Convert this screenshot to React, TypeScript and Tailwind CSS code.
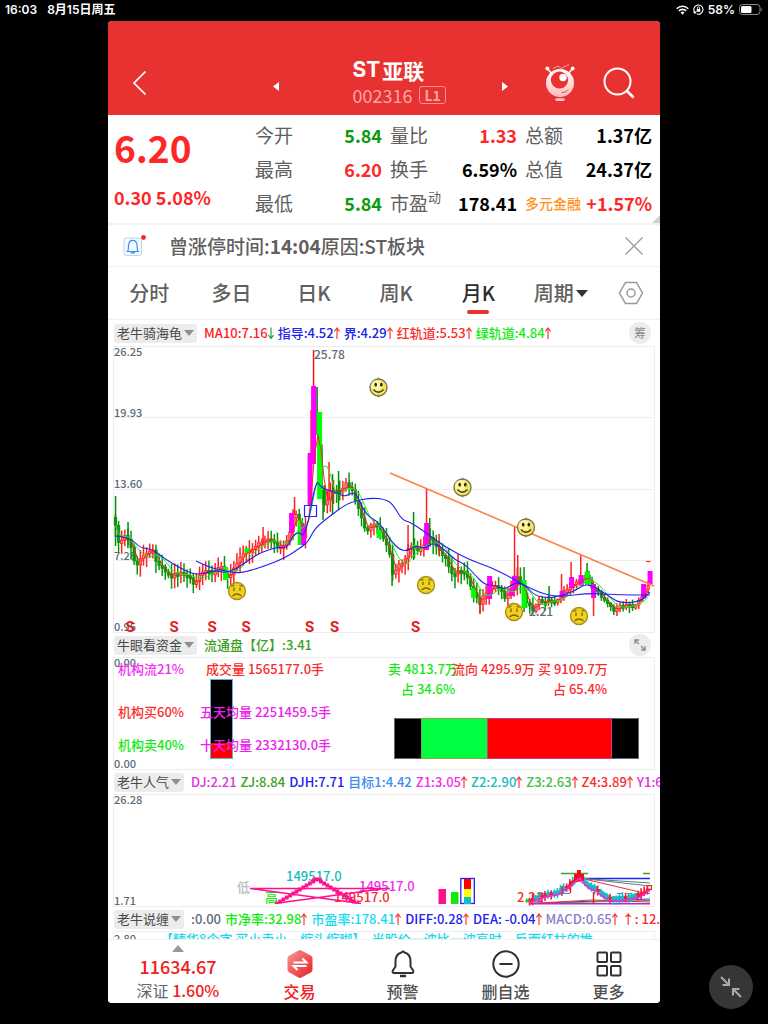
import React from "react";

type Pt = [number, number];

const FONT = "font-['Noto_Sans_CJK_SC','Noto_Sans',sans-serif]";

/* ---------- small drawings ---------- */

function Arrow({ down = false, className = "text-[#fa3a3a]" }: { down?: boolean; className?: string }) {
  return (
    <svg viewBox="0 0 6 14" className={`h-[14px] w-[6px] shrink-0 ${className}`} fill="none" stroke="currentColor" strokeWidth="1.2">
      {down ? <path d="M3 1.500v11M.4 9 3 12.500 5.600 9" /> : <path d="M3 13V2M.4 5.500 3 2l2.600 3.500" />}
    </svg>
  );
}

function Robot() {
  return (
    <svg viewBox="0 0 30 38" className="h-[38px] w-[30px]">
      <defs>
        <linearGradient id="bot" x1="0" y1="0" x2="0" y2="1">
          <stop offset="0" stopColor="#fff" />
          <stop offset="1" stopColor="#ffb9b9" />
        </linearGradient>
      </defs>
      <path d="M8 4.500 13 2l3 2.500 8-4" fill="none" stroke="#f6a5a5" strokeWidth="1" />
      <path d="M2.500 4.500 6 9M27.500 4.500 24 9" stroke="#fff" strokeWidth="1.300" />
      <circle cx="2.300" cy="4.500" r="1.900" fill="#fff" />
      <circle cx="27.700" cy="4.500" r="1.900" fill="#fff" />
      <circle cx="15" cy="19" r="14" fill="url(#bot)" />
      <circle cx="14.500" cy="16" r="8.600" fill="#e83131" />
      <circle cx="18" cy="13.500" r="3.700" fill="#fff" />
      <path d="M16.500 28.500c3 .3 5-.8 6.500-3" fill="none" stroke="#e84a4a" strokeWidth="1" />
      <ellipse cx="15" cy="35.500" rx="5" ry="1.500" fill="#ffc4c4" />
    </svg>
  );
}

function Face({ x, y, sad = false }: { x: number; y: number; sad?: boolean }) {
  return (
    <g transform={`translate(${x} ${y})`}>
      {!sad && <path d="M0-9.800V9.800" stroke="#8a8468" strokeWidth="1.500" />}
      <circle r="8.500" fill={sad ? "#efd21c" : "#f3e35c"} stroke={sad ? "#a88c18" : "#77704a"} strokeWidth="1.300" />
      {!sad && <circle cx="-2" cy="-2" r="5.500" fill="#fffbb5" opacity=".75" />}
      {sad ? (
        <g fill="none" stroke="#7b6410" strokeWidth="1.300">
          <path d="M-3-3.500V0M3-3.500V0M-4.500 5Q0 1 4.500 5M-5.500-4.500l3-1.500M5.500-4.500l-3-1.500" />
        </g>
      ) : (
        <>
          <ellipse cx="-2.800" cy="-2.800" rx="1.300" ry="1.900" fill="#222" />
          <ellipse cx="2.800" cy="-2.800" rx="1.300" ry="1.900" fill="#222" />
          <path d="M-5 2Q0 7.500 5 2" fill="none" stroke="#3a3416" strokeWidth="1.300" />
        </>
      )}
    </g>
  );
}

/* ---------- price chart ---------- */

const TREND: Pt[] = [
  [115, 525], [118, 540], [121, 544], [125, 535], [130, 543], [134, 560], [137, 567], [141, 558], [147, 551], [152, 549],
  [157, 562], [162, 567], [167, 572], [171, 578], [176, 573], [181, 572], [186, 575], [190, 579], [194, 586], [198, 579],
  [204, 572], [209, 569], [215, 573], [220, 565], [226, 577], [232, 572], [238, 560], [244, 551], [250, 551], [256, 545],
  [262, 542], [270, 540], [277, 545], [284, 546], [290, 532], [294, 515], [298, 515], [301, 538], [304, 540], [307, 515],
  [310, 480], [313, 420], [316, 420], [319, 460], [322, 500], [325, 508], [330, 492], [336, 490], [341, 494], [346, 484],
  [352, 490], [357, 505], [362, 521], [367, 532], [373, 524], [379, 530], [384, 540], [389, 551], [393, 574], [398, 566],
  [404, 562], [409, 545], [414, 545], [419, 553], [424, 545], [429, 533], [434, 546], [441, 552], [446, 558], [451, 573],
  [457, 572], [463, 570], [469, 583], [475, 595], [480, 603], [485, 592], [490, 588], [495, 583], [500, 591], [506, 599],
  [512, 590], [517, 577], [523, 590], [528, 606], [533, 611], [537, 601], [545, 601], [552, 601], [559, 598], [566, 590],
  [573, 583], [580, 580], [586, 577], [592, 588], [598, 590], [603, 598], [608, 605], [614, 610], [620, 607], [628, 605],
  [636, 604], [642, 596], [647, 588], [651, 576],
];

function at(points: Pt[], x: number): number {
  for (let i = 1; i < points.length; i++) {
    if (x <= points[i][0]) {
      const [x0, y0] = points[i - 1];
      const [x1, y1] = points[i];
      return y0 + ((y1 - y0) * (x - x0)) / (x1 - x0);
    }
  }
  return points[points.length - 1][1];
}

const noise = (n: number) => {
  const v = Math.sin(n * 12.9898) * 43758.5453;
  return v - Math.floor(v);
};

const COUNT = 172;
const STEP = 3.115;
const closes: Pt[] = Array.from({ length: COUNT }, (_, i) => {
  const x = 115.5 + i * STEP;
  return [x, at(TREND, x) + (noise(i) - 0.5) * 4];
});

function average(span: number): string {
  return closes
    .map(([x], i) => {
      const part = closes.slice(Math.max(0, i - span + 1), i + 1);
      return `${x.toFixed(1)},${(part.reduce((s, p) => s + p[1], 0) / part.length).toFixed(1)}`;
    })
    .join(" ");
}

/* Quadratic segments through the midpoints give the averages their rounded run. */
function smooth(points: Pt[]): string {
  let d = `M${points[0][0]} ${points[0][1]}`;
  for (let i = 1; i < points.length - 1; i++) {
    const [x, y] = points[i];
    const [nx, ny] = points[i + 1];
    d += `Q${x} ${y} ${(x + nx) / 2} ${(y + ny) / 2}`;
  }
  const end = points[points.length - 1];
  return `${d}L${end[0]} ${end[1]}`;
}

const MID_LINE: Pt[] = [
  [115, 536], [130, 537], [140, 548], [152, 549], [165, 559], [180, 568], [193, 574], [202, 574], [215, 570], [225, 573],
  [238, 568], [250, 559], [262, 552], [278, 547], [287, 548], [293, 535], [300, 532], [303, 537], [309, 520], [312, 500],
  [317, 480], [321, 488], [335, 492], [345, 497], [353, 492], [358, 497], [366, 515], [380, 523], [390, 540], [400, 550],
  [408, 551], [416, 545], [425, 549], [433, 542], [445, 550], [455, 560], [465, 564], [475, 575], [485, 585], [495, 585],
  [505, 590], [515, 582], [525, 585], [535, 596], [550, 598], [560, 596], [575, 591], [585, 584], [595, 587], [610, 597],
  [620, 603], [640, 602], [650, 592],
];
const SLOW_LINE: Pt[] = [
  [196, 561], [208, 567], [225, 571], [236, 573], [245, 572], [262, 567], [285, 558], [300, 548], [308, 542], [315, 528],
  [330, 516], [345, 505], [355, 501], [370, 498], [384, 499], [392, 503], [402, 520], [410, 522], [425, 532], [445, 547],
  [470, 560], [490, 567], [510, 577], [520, 583], [540, 593], [558, 597], [590, 593], [620, 595], [650, 595],
];

/* x, top, bottom of solid body, colour */
const BODIES: [number, number, number, string][] = [
  [225.5, 567, 580, "#00ff00"], [247, 548, 553, "#00ff00"], [291.5, 513, 533, "#ff00ff"], [300, 520, 545, "#00ff00"],
  [303.5, 524, 545, "#ff00ff"], [310, 453, 505, "#ff00ff"], [313.5, 386, 464, "#ff00ff"], [319.5, 412, 499, "#00ff00"],
  [379, 530, 538, "#00ff00"], [414, 545, 549, "#00ff00"], [426.5, 523, 550, "#ff00ff"], [473.5, 588, 598, "#00ff00"],
  [489.5, 576, 599, "#ff00ff"], [511.5, 588, 596, "#ff00ff"], [514.5, 576, 591, "#ff00ff"], [524, 580, 608, "#00ff00"],
  [562, 591, 597, "#ff00ff"], [571.5, 577, 588, "#ff00ff"], [581, 575, 586, "#ff00ff"], [587, 572, 584, "#00ff00"],
  [593.5, 584, 598, "#ff00ff"], [643.5, 584, 598, "#ff00ff"], [650, 571, 584, "#ff00ff"],
];

/* x, high, low, colour */
const WICKS: [number, number, number, string][] = [
  [115.5, 496, 546, "#008f00"], [128, 522, 545, "#008f00"], [294.5, 497, 515, "#ff2020"], [313.5, 350, 400, "#f01818"],
  [317, 387, 435, "#006f20"], [311, 410, 455, "#ff2020"], [329, 462, 500, "#ff2020"], [332.5, 474, 515, "#008f00"],
  [323, 490, 520, "#008f00"], [338.5, 471, 510, "#008f00"], [263, 527, 545, "#ff2020"], [392, 555, 586, "#008f00"],
  [408, 525, 550, "#ff2020"], [413.5, 512, 560, "#008f00"], [426.5, 489, 525, "#ff2020"], [429.7, 518, 545, "#008f00"],
  [439, 534, 555, "#ff2020"], [458, 554, 572, "#ff2020"], [480, 598, 614, "#ff2020"], [514.5, 527, 578, "#ff2020"],
  [517.7, 555, 585, "#ff2020"], [524, 567, 612, "#008f00"], [549, 586, 602, "#008f00"], [561.5, 574, 595, "#ff2020"],
  [571, 562, 580, "#ff2020"], [580.7, 555, 580, "#ff2020"], [587, 563, 584, "#008f00"], [593.5, 590, 616, "#ff2020"],
];

function Label({ x, y, fill = "#5c6b78", children }: { x: number; y: number; fill?: string; children: React.ReactNode }) {
  return <text x={x} y={y} fill={fill} fontSize="11" fontWeight="500">{children}</text>;
}

function PriceChart() {
  return (
    <svg viewBox="108 346 552 287" className="block w-full" role="img" aria-label="月K">
      <g fill="none" stroke="#eeeeef" strokeWidth="1">
        <path d="M113.500 346.500H654.500V632.500H113.500ZM113 417.500H655M113 489.500H655M113 560.500H655" />
      </g>
      <Label x={114} y={356}>26.25</Label>
      <Label x={114} y={417}>19.93</Label>
      <Label x={114} y={488}>13.60</Label>
      <Label x={114} y={560}>7.28</Label>
      <Label x={114} y={631}>0.95</Label>
      <text x="314" y="359" fill="#5c6b78" fontSize="12" fontWeight="500">25.78</text>
      {closes.map(([x, y], i) => {
        if (x > 307 && x < 321) return null;
        const prev = i ? closes[i - 1][1] : y - 8;
        const up = y <= prev;
        const color = up ? "#ff2020" : "#0a960a";
        const body = Math.max(3, Math.abs(y - prev));
        const top = Math.min(y, prev);
        const calm = x > 535 ? 0.5 : 1;
        return (
          <g key={i}>
            <rect x={x - 0.8} y={top - (2 + noise(i + 300) * 9) * calm} width="1.500" height={body + (5 + (noise(i + 300) + noise(i + 700)) * 9) * calm} fill={color} />
            <rect x={x - 1.2} y={top} width="2.400" height={body} fill={up ? "#ff8a8a" : color} stroke={color} strokeWidth="0.800" />
          </g>
        );
      })}
      {WICKS.map(([x, a, b, c], i) => <rect key={i} x={x - 0.7} y={a} width="1.500" height={b - a} fill={c} />)}
      {BODIES.map(([x, a, b, c], i) => <rect key={i} x={x - 2.4} y={a} width="5" height={b - a} fill={c} />)}
      <g fill="none" strokeLinejoin="round">
        <polyline points={average(3)} stroke="#f02828" strokeWidth="1" />
        <polyline points={average(6)} stroke="#20f020" strokeWidth="1" />
        <path d={smooth(MID_LINE)} stroke="#2222ee" strokeWidth="1.100" />
        <path d={smooth(SLOW_LINE)} stroke="#2222ee" strokeWidth="1.100" />
        <rect x="304.500" y="505.500" width="12" height="11" stroke="#2222ff" strokeWidth="1.200" />
        <path d="M390 473 654 586" stroke="#ff8048" strokeWidth="1.600" />
        <path d="M646 561.500h4.500" stroke="#f03030" strokeWidth="1.200" />
      </g>
      <Face x={378.5} y={387.5} />
      <Face x={462.5} y={487.5} />
      <Face x={526} y={527.5} />
      <Face x={237} y={591} sad />
      <Face x={426} y={585} sad />
      <Face x={514} y={612} sad />
      <Face x={579} y={616} sad />
      <text x="529" y="616" fill="#5c6b78" fontSize="12" fontWeight="500">2.21</text>
      <g fill="#e02020" className="font-[Roboto,sans-serif]" fontSize="15" fontWeight="700" textAnchor="middle">
        {[130, 174, 212, 246, 309.5, 334.5, 415.5].map((x) => <text key={x} x={x} y="632">S</text>)}
      </g>
    </svg>
  );
}

/* ---------- capital chart ---------- */

function CapitalChart() {
  const t = (x: number, y: number, fill: string, s: string) => <text key={s} x={x} y={y} fill={fill} fontSize="13">{s}</text>;
  return (
    <svg viewBox="108 657 552 113" className="block w-full" role="img" aria-label="牛眼看资金" fontWeight="500">
      <path d="M113.500 657.500H654.500V769.500H113.500Z" fill="none" stroke="#eeeeef" />
      <Label x={114} y={667}>0.00</Label>
      <Label x={114} y={768}>0.00</Label>
      <rect x="210.500" y="679.500" width="22" height="79" fill="#000" stroke="#5fb4cc" />
      <rect x="211" y="743" width="21" height="15" fill="#f00" />
      {t(118, 674, "#f030f0", "机构流21%")}
      {t(118, 717, "#fb2c2c", "机构买60%")}
      {t(118, 750, "#12ea12", "机构卖40%")}
      {t(206, 674, "#fb2c2c", "成交量 1565177.0手")}
      {t(200, 717, "#ee22ee", "五天均量 2251459.5手")}
      {t(200, 750, "#ee22ee", "十天均量 2332130.0手")}
      {t(388, 674, "#12ea12", "卖 4813.7万")}
      {t(452, 674, "#fb2c2c", "流向 4295.9万")}
      {t(538, 674, "#fb2c2c", "买 9109.7万")}
      {t(401, 694, "#12ea12", "占 34.6%")}
      {t(553, 694, "#fb2c2c", "占 65.4%")}
      <rect x="394.500" y="718.500" width="244" height="40" fill="#000" stroke="#5a6a7a" />
      <rect x="421.500" y="718.500" width="66" height="40" fill="#00ff40" stroke="#80b040" />
      <rect x="487.500" y="718.500" width="124" height="40" fill="#f00" stroke="#c04080" />
    </svg>
  );
}

/* ---------- popularity chart ---------- */

const MINI: Pt[] = [
  [529, 901], [536, 898], [543, 896], [550, 894], [557, 893], [563, 889], [569, 886], [575, 880], [580, 876], [585, 883],
  [590, 887], [596, 889], [602, 894], [608, 898], [616, 899], [624, 898], [632, 897], [640, 895], [646, 891], [651, 887],
];

/* Stair steps that rise from the left foot to the peak at 317 and fall to the right one. */
const STAIRS = Array.from({ length: 13 }, (_, i) => {
  const y = 902.5 - i * 2;
  const inset = i * 3.3;
  return `M${275 + inset} ${y}h7M${352 - inset} ${y}h7`;
}).join("");

function PopularityChart() {
  return (
    <svg viewBox="108 794 552 113" className="block w-full" role="img" aria-label="老牛人气" fontWeight="500">
      <path d="M113.500 794.500H654.500V906.500H113.500Z" fill="none" stroke="#eeeeef" />
      <Label x={114} y={804}>26.28</Label>
      <Label x={114} y={905}>1.71</Label>
      <g fontSize="13">
        <text x="237" y="892" fill="#bdbdbd">低</text>
        <text x="265" y="902" fill="#12ea12">高</text>
        <text x="286" y="881" fill="#17bcc0">149517.0</text>
        <text x="359" y="891" fill="#f030f0">149517.0</text>
        <text x="334" y="902" fill="#fb2c2c">149517.0</text>
        <text x="517" y="902" fill="#fb2c2c">2.21</text>
      </g>
      <g fill="none" stroke="#ff1090" strokeWidth="1.500">
        <path d="M250 888.500H390M250 888.500 361 903.500M275 903.500 388 888" />
        <path d={STAIRS} strokeWidth="2" />
      </g>
      <rect x="438.500" y="889" width="7.500" height="15" fill="#ff1090" />
      <rect x="451" y="892" width="7.500" height="12" fill="#10e810" />
      <rect x="460.800" y="878.500" width="13.500" height="25" fill="none" stroke="#2222ee" strokeWidth="1.300" />
      <rect x="464" y="879" width="7" height="10" fill="#f00" />
      <rect x="464" y="889" width="7" height="8" fill="#ff0" />
      <rect x="464" y="897" width="7" height="7" fill="#17bcc0" />
      <g fill="none" strokeWidth="1">
        <path d="M561 873.500h27M643 873.500h7" stroke="#46a02c" strokeWidth="1.400" />
        <path d="M580 878.500H650" stroke="#2020f0" strokeWidth="1.400" />
        <path d="M582 878.500 650 883" stroke="#2ca040" />
        <path d="M582 878.500 650 886" stroke="#8060c0" />
        <path d="M582 878.500 644 893" stroke="#f03030" />
        <path d="M540 893.500h30M617 893.500h5M627 893.500h5M636 893.500h14" stroke="#3c80e0" />
        <path d="M530 903.500 650 899" stroke="#2040c0" />
        <path d="M530 903.500 650 900.500" stroke="#2ca040" />
        <path d="M530 903.500 592 900l58 2" stroke="#f03030" />
        <path d="M530 903.700H650" stroke="#c020e0" strokeWidth="1.400" />
        {Array.from({ length: 39 }, (_, i) => {
          const x = 529.5 + i * 3.1;
          const y = at(MINI, x);
          const up = i > 34 || noise(i + 40) > 0.5;
          return (
            <g key={i} stroke={up ? "#f02030" : "#17bcc0"}>
              <path d={`M${x} ${y - 3 - noise(i) * 3}V${y + 3 + noise(i + 9) * 3}`} strokeWidth="1.600" />
              <path d={`M${x - 1.5} ${y}h4`} strokeWidth={up ? 3 : 5} />
            </g>
          );
        })}
        <path d="m571 883 4-3v-5h3v-4h2v4h3v6" stroke="#f01010" strokeWidth="2" fill="#f01010" />
        <path d="M562 886v10M570.500 881v12M593.500 892v12" stroke="#f01010" strokeWidth="1.300" />
        <polyline points={MINI.map(([x, y]) => `${x},${y + 2}`).join(" ")} stroke="#ff20e0" strokeWidth="1.600" />
        <path d="M647.500 885.500h4v4h-4z" stroke="#f02020" strokeWidth="1.200" />
        <path d="m526 898 4 3-4 2z" fill="#10d810" />
      </g>
    </svg>
  );
}

/* ---------- page parts ---------- */

function StatusBar() {
  return (
    <div className="flex h-[21px] shrink-0 items-center justify-between px-[5px] pb-[2px] font-['Inter','Noto_Sans_CJK_SC',sans-serif] text-[12px] font-semibold leading-[18px] text-white">
      <div className="flex gap-[10px]">
        <span>16:03</span>
        <span>8月15日周五</span>
      </div>
      <div className="flex items-center gap-1">
        <svg viewBox="0 0 14 10" className="h-[10px] w-[13px]" fill="none" stroke="#fff" strokeWidth="1.700">
          <path d="M.8 3.600a8.800 8.800 0 0 1 12.400 0M3 6a5.700 5.700 0 0 1 8 0" />
          <path d="m4.900 7.700 2.100 2.300 2.100-2.300a3 3 0 0 0-4.200 0Z" fill="#fff" stroke="none" />
        </svg>
        <svg viewBox="0 0 12 12" className="h-[11px] w-[11px]" fill="none" stroke="#fff" strokeWidth="1.200">
          <path d="M2 9.200a5 5 0 1 1 2 1.500M.6 8.500l1.500 1.400L3.600 8" />
          <rect x="4" y="5.500" width="4" height="3" fill="#fff" stroke="none" />
          <path d="M4.800 5.500V4.300a1.200 1.200 0 0 1 2.400 0v1.200" strokeWidth=".9" />
        </svg>
        <span>58%</span>
        <svg viewBox="0 0 24 11" className="h-[11px] w-[24px]">
          <rect x=".5" y=".5" width="20.500" height="10" rx="3" fill="none" stroke="#8a8a8a" />
          <rect x="2" y="2" width="10.500" height="7" rx="1.500" fill="#fff" />
          <path d="M22.300 3.800v3.400c1.200-.5 1.200-2.900 0-3.400Z" fill="#8a8a8a" />
        </svg>
      </div>
    </div>
  );
}

function Header() {
  return (
    <header className="flex items-center bg-[#e83131] pb-[6px] pt-[36px] text-white">
      <button aria-label="返回" className="flex w-[165px] items-center pl-[24px]">
        <svg viewBox="0 0 15 26" className="h-[26px] w-[15px]" fill="none" stroke="#fff" strokeWidth="1.700"><path d="M13.500 1.500 2 13l11.500 11.500" /></svg>
      </button>
      <div className="flex flex-1 items-center justify-between">
        <button aria-label="上一只">
          <svg viewBox="0 0 6 9" className="mt-[6px] h-[9px] w-[6px]"><path d="M6 0v9L0 4.500Z" fill="#fff" /></svg>
        </button>
        <div className="h-[52px] w-[76px] whitespace-nowrap">
          <h1 className="flex h-[26px] items-center gap-[2px] text-[21px] font-bold leading-[26px]">
            <span className="font-['Inter',sans-serif]">ST</span>
            <span>亚联</span>
          </h1>
          <div className="flex h-[24px] items-center gap-[7px] leading-[24px] text-[#f8a5a5]">
            <span className="text-[18px]">002316</span>
            <span className="rounded-[3px] border border-[#f29090] px-1 text-[14px] font-bold leading-[16px]">L1</span>
          </div>
        </div>
        <button aria-label="下一只">
          <svg viewBox="0 0 6 9" className="mt-[6px] h-[9px] w-[6px]"><path d="M0 0v9l6-4.500Z" fill="#fff" /></svg>
        </button>
      </div>
      <div className="flex w-[152px] items-center gap-[28px] pl-[37px]">
        <button aria-label="助手"><Robot /></button>
        <button aria-label="搜索">
          <svg viewBox="0 0 32 32" className="h-8 w-8" fill="none" stroke="#fff" strokeWidth="2"><circle cx="14.500" cy="14.500" r="13" /><path d="m24 24 6.500 6.500" strokeWidth="2.600" /></svg>
        </button>
      </div>
    </header>
  );
}

const RED = "text-[#ff2626]";
const GREEN = "text-[#0a9c0a]";

function Quote({ label, value, tone, sup, orange }: { label: string; value: string; tone: string; sup?: string; orange?: boolean }) {
  return (
    <div className="flex h-[34px] items-center justify-between whitespace-nowrap leading-[26px]">
      <dt className={orange ? "text-[14px] font-medium text-[#ff921f]" : "flex text-[19px] text-[#606060]"}>
        {label}
        {sup && <span className="text-[13px] leading-[14px]">{sup}</span>}
      </dt>
      <dd className={`text-[18px] font-bold ${tone}`}>{value}</dd>
    </div>
  );
}

function Quotes() {
  return (
    <section className="relative flex h-[110px] border-b-2 border-[#f3f3f4] pl-[6px] pr-2 pt-[3px]">
      <div className="w-[141px] shrink-0">
        <div className="pt-[4px] text-[37px] font-bold leading-[50px] text-[#ff2626]">6.20</div>
        <div className="pt-[12px] text-[18px] font-bold leading-[26px] text-[#ff2626]">0.30 5.08%</div>
      </div>
      <dl className="grid flex-1 grid-cols-3 content-start gap-x-2">
        <Quote label="今开" value="5.84" tone={GREEN} />
        <Quote label="量比" value="1.33" tone={RED} />
        <Quote label="总额" value="1.37亿" tone="text-black" />
        <Quote label="最高" value="6.20" tone={RED} />
        <Quote label="换手" value="6.59%" tone="text-black" />
        <Quote label="总值" value="24.37亿" tone="text-black" />
        <Quote label="最低" value="5.84" tone={GREEN} />
        <Quote label="市盈" sup="动" value="178.41" tone="text-black" />
        <Quote label="多元金融" value="+1.57%" tone={RED} orange />
      </dl>
      <svg viewBox="0 0 8 8" className="absolute bottom-0 right-0 h-2 w-2"><path d="M8 0v8H0Z" fill="#cfcfcf" /></svg>
    </section>
  );
}

function Notice() {
  return (
    <section className="flex h-[42px] items-center border-b border-[#f0f0f1] pl-[15px] pr-[16px]">
      <svg viewBox="0 0 24 24" className="h-6 w-6 shrink-0" fill="none">
        <rect x="1" y="4" width="17.500" height="17.500" rx="2" fill="#f5faff" stroke="#b5d5fa" />
        <path d="M3.500 17.500h12.500M4.800 17.200c.8-1.500.5-3.500.7-5.700C5.800 8 7.500 6.300 9.800 6.300s4 1.700 4.300 5.200c.2 2.200 0 4.200.8 5.700M8 18c.5 1.500 3.200 1.500 3.700 0" stroke="#3d8cf0" strokeWidth="1.200" />
        <circle cx="20.500" cy="3.500" r="2.400" fill="#f02828" />
      </svg>
      <p className="flex-1 pl-[22px] text-[19px] font-medium leading-[26px] text-[#606060]">
        曾涨停时间:<b>14:04</b>原因:ST板块
      </p>
      <button aria-label="关闭">
        <svg viewBox="0 0 20 20" className="h-5 w-5" stroke="#999" strokeWidth="1.300"><path d="m1.500 1.500 17 17M18.500 1.500l-17 17" /></svg>
      </button>
    </section>
  );
}

function Tabs() {
  return (
    <nav className="grid h-[53px] grid-cols-[repeat(6,1fr)_58px] border-b border-[#f0f0f1] text-[20px] font-medium leading-[28px] text-[#606060]">
      {["分时", "多日", "日K", "周K", "月K", "周期"].map((name) => (
        <button key={name} className={`relative flex items-center justify-center gap-[2px] ${name === "月K" ? "text-[#2c2c2c]" : ""}`}>
          {name}
          {name === "周期" && <svg viewBox="0 0 12 7" className="h-[7px] w-3"><path d="M0 0h12L6 7Z" fill="#333" /></svg>}
          {name === "月K" && <span className="absolute bottom-[5px] left-1/2 h-1 w-[22px] -translate-x-1/2 rounded-full bg-[#e83131]" />}
        </button>
      ))}
      <button aria-label="设置" className="flex items-center justify-center">
        <svg viewBox="0 0 26 24" className="h-6 w-[26px]" fill="none" stroke="#999" strokeWidth="1.500"><path d="M7.500 1.500h11L24.500 12l-6 10.500h-11L1.500 12Z" /><circle cx="13" cy="12" r="4" /></svg>
      </button>
    </nav>
  );
}

type Item = { text: string; color: string; arrow?: "up" | "down" };

function IndicatorRow({ name, items, height, children }: { name: string; items: Item[]; height: string; children?: React.ReactNode }) {
  return (
    <div className={`flex shrink-0 items-center overflow-hidden whitespace-nowrap pl-[6px] text-[13px] leading-[18px] ${height}`}>
      <button className="flex h-[19px] shrink-0 items-center gap-[2px] rounded-[3px] bg-[#ececec] px-[3px] text-[#484848]">
        {name}
        <svg viewBox="0 0 10 6" className="h-[6px] w-[10px]"><path d="M0 0h10L5 6Z" fill="#8f8f8f" /></svg>
      </button>
      <div className="flex flex-1 gap-[4px] overflow-hidden pl-[7px] font-medium">
        {items.map((it) => (
          <span key={it.text} className={`flex shrink-0 items-center ${it.color}`}>
            {it.text}
            {it.arrow && <Arrow down={it.arrow === "down"} className={it.arrow === "down" ? "text-[#2c9c4c]" : "text-[#fa3a3a]"} />}
          </span>
        ))}
      </div>
      {children}
    </div>
  );
}

function BottomBar() {
  const item = "flex flex-col items-center pt-[9px] text-[16px] font-medium leading-[24px]";
  const icon = "h-[30px] w-[30px]";
  return (
    <nav className="grid h-[64px] shrink-0 grid-cols-[140px_repeat(4,1fr)] border-t border-[#f0f0f1] bg-white">
      <button className="flex flex-col items-center whitespace-nowrap pt-[5px] text-[#f02020]">
        <svg viewBox="0 0 12 7" className="h-[7px] w-3"><path d="M0 7h12L6 0Z" fill="#999" /></svg>
        <span className="text-[18px] font-medium leading-[28px]">11634.67</span>
        <span className="text-[16px] font-medium leading-[20px]"><span className="font-normal text-[#666]">深证</span> 1.60%</span>
      </button>
      <button className={`${item} text-[#f02020]`}>
        <svg viewBox="0 0 30 30" className={icon}>
          <defs><linearGradient id="hex" x1="0" y1="0" x2="1" y2="1"><stop offset="0" stopColor="#f79a9a" /><stop offset="1" stopColor="#e61c20" /></linearGradient></defs>
          <path d="M13.500 1.400q1.500-.8 3 0l9.500 5.400q1.500.9 1.500 2.600v11.200q0 1.700-1.500 2.600l-9.500 5.400q-1.500.8-3 0L4 23.200q-1.500-.9-1.500-2.600V9.400q0-1.700 1.500-2.600Z" fill="url(#hex)" />
          <path d="M8.500 13.500h13l-4-4M21.500 17h-13l4 4" fill="none" stroke="#fff" strokeWidth="2" />
        </svg>
        交易
      </button>
      <button className={`${item} text-[#505050]`}>
        <svg viewBox="0 0 30 30" className={icon} fill="none" stroke="#303030" strokeWidth="2" strokeLinejoin="round"><path d="M13.500 3.500q1.500-2 3 0c4 1 6 4.500 6 9v5l2.800 4.200q.5 2.300-1.500 2.300H6.200q-2 0-1.500-2.300l2.800-4.200v-5c0-4.500 2-8 6-9Z" /><path d="M12 27h6" strokeWidth="2.500" /></svg>
        预警
      </button>
      <button className={`${item} text-[#505050]`}>
        <svg viewBox="0 0 30 30" className={icon} fill="none" stroke="#303030" strokeWidth="2"><circle cx="15" cy="15" r="12.700" /><path d="M8.500 15h13" /></svg>
        删自选
      </button>
      <button className={`${item} text-[#505050]`}>
        <svg viewBox="0 0 30 30" className={icon} fill="none" stroke="#303030" strokeWidth="2"><rect x="3.500" y="3.500" width="9.500" height="9.500" rx="1" /><rect x="17" y="3.500" width="9.500" height="9.500" rx="1" /><rect x="3.500" y="17" width="9.500" height="9.500" rx="1" /><rect x="17" y="17" width="9.500" height="9.500" rx="1" /></svg>
        更多
      </button>
    </nav>
  );
}

const UP = "up" as const;

export default function App() {
  return (
    <div className={`relative flex h-screen flex-col bg-black pb-[21px] ${FONT}`}>
      <StatusBar />
      <main className="mx-auto flex min-h-0 w-full max-w-[552px] flex-1 flex-col overflow-hidden rounded-[4px] bg-white">
        <Header />
        <Quotes />
        <Notice />
        <Tabs />
        <IndicatorRow
          name="老牛骑海龟"
          height="h-[26px]"
          items={[
            { text: "MA10:7.16", color: "text-[#ff1c1c]", arrow: "down" },
            { text: "指导:4.52", color: "text-[#2222ee]", arrow: UP },
            { text: "界:4.29", color: "text-[#2222ee]", arrow: UP },
            { text: "红轨道:5.53", color: "text-[#fb2c2c]", arrow: UP },
            { text: "绿轨道:4.84", color: "text-[#12ea12]", arrow: UP },
          ]}
        >
          <button className="mr-[9px] h-[22px] w-[22px] rounded-full bg-[#ececec] text-[12px] text-[#8a8a8a]">筹</button>
        </IndicatorRow>
        <PriceChart />
        <IndicatorRow name="牛眼看资金" height="h-[24px]" items={[{ text: "流通盘【亿】:3.41", color: "text-[#3aa024]" }]}>
          <button aria-label="展开" className="mr-[9px] flex h-[22px] w-[22px] items-center justify-center rounded-full bg-[#ececec]">
            <svg viewBox="0 0 12 12" className="h-3 w-3" fill="none" stroke="#8a8a8a" strokeWidth="1.300"><path d="M1 5V1h4M1 1l4 4M11 7v4H7M11 11 7 7" /></svg>
          </button>
        </IndicatorRow>
        <CapitalChart />
        <IndicatorRow
          name="老牛人气"
          height="h-[24px]"
          items={[
            { text: "DJ:2.21", color: "text-[#d838d8]" },
            { text: "ZJ:8.84", color: "text-[#3aa024]" },
            { text: "DJH:7.71", color: "text-[#2222ee]" },
            { text: "目标1:4.42", color: "text-[#3f8cf0]" },
            { text: "Z1:3.05", color: "text-[#f030f0]", arrow: UP },
            { text: "Z2:2.90", color: "text-[#17bcc0]", arrow: UP },
            { text: "Z3:2.63", color: "text-[#46be46]", arrow: UP },
            { text: "Z4:3.89", color: "text-[#fb2c2c]", arrow: UP },
            { text: "Y1:6.18", color: "text-[#e028e0]" },
          ]}
        />
        <PopularityChart />
        <IndicatorRow
          name="老牛说缠"
          height="h-[24px]"
          items={[
            { text: ":0.00", color: "text-[#5c6b78]" },
            { text: "市净率:32.98", color: "text-[#12ea12]", arrow: UP },
            { text: "市盈率:178.41", color: "text-[#18d8ee]", arrow: UP },
            { text: "DIFF:0.28", color: "text-[#2222ee]", arrow: UP },
            { text: "DEA: -0.04", color: "text-[#2222ee]", arrow: UP },
            { text: "MACD:0.65", color: "text-[#8a7ccc]", arrow: UP },
            { text: "↑: 12.00", color: "text-[#fb2c2c]" },
          ]}
        />
        <div className="mx-[5px] min-h-0 flex-1 overflow-hidden border-x border-t border-[#eeeeef]">
          <div className="flex whitespace-nowrap text-[13px] font-medium leading-[14px] text-[#18d8ee]">
            <span className="w-[46px] text-[11px] leading-[12px] text-[#5c6b78]">2.80</span>
            <span>【精华8个字 买小卖小，缩头缩脚】，当股价一波比一波高时，反而红柱的堆</span>
          </div>
        </div>
        <BottomBar />
      </main>
      <button aria-label="缩小" className="absolute bottom-[15px] right-[15px] flex h-11 w-11 items-center justify-center rounded-full bg-[#363636]">
        <svg viewBox="0 0 22 22" className="h-[22px] w-[22px]" fill="none" stroke="#aaa" strokeWidth="2"><path d="m1 1 8 8M9 2.500V9H2.500M21 21l-8-8M13 19.500V13h6.500" /></svg>
      </button>
    </div>
  );
}
